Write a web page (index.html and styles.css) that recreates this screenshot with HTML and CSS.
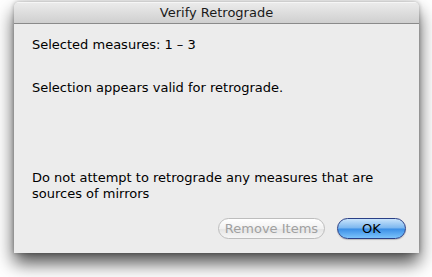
FILE: index.html
```html
<!DOCTYPE html>
<html lang="en">
<head>
    <meta charset="UTF-8">
    <meta name="viewport" content="width=device-width, initial-scale=1.0">
    <title>Verify Retrograde</title>
    <link rel="stylesheet" href="styles.css">
</head>
<body>

<div class="window">
    <div class="titlebar">Verify Retrograde</div>
    <div class="content">
        <p class="line first">Selected measures: 1 &ndash; 3</p>
        <p class="line status">Selection appears valid for retrograde.</p>
        <p class="line warning">Do not attempt to retrograde any measures that are sources of mirrors</p>
        <div class="buttons">
            <button class="btn" disabled>Remove Items</button>
            <button class="btn default">OK</button>
        </div>
    </div>
</div>

</body>
</html>
```

FILE: styles.css
```css
html {
    height: 100%;
}
body {
    box-sizing: border-box;
    min-height: 277px;
    height: 100%;
    margin: 0;
    padding: 2px 0 0 14px;
    background-color: #fff;
    font-family: "DejaVu Sans", "Lucida Grande", sans-serif;
    font-size: 13px;
    color: #000;
}
.window {
    width: 405px;
    height: 251px;
    background-color: #ececec;
    border-radius: 5px 5px 0 0;
    box-shadow: 0 10px 18px rgba(0, 0, 0, 0.7), 0 0 4px rgba(0, 0, 0, 0.3);
    display: flex;
    flex-direction: column;
    overflow: hidden;
}
.titlebar {
    height: 20px;
    line-height: 20px;
    text-align: center;
    background: linear-gradient(#ebebeb, #cfcfcf);
    border-top: 1px solid #f6f6f6;
    border-bottom: 1px solid #8a8a8a;
    color: #1a1a1a;
}
.content {
    flex: 1;
    display: flex;
    flex-direction: column;
    padding: 13px 13px 14px 18px;
}
.line {
    margin: 0;
    line-height: 16px;
}
.status {
    margin-top: 27px;
}
.warning {
    margin-top: 74px;
    width: 360px;
    line-height: 16px;
}
.buttons {
    margin-top: auto;
    display: flex;
    justify-content: flex-end;
    gap: 12px;
}
.btn {
    height: 21px;
    padding: 0;
    border-radius: 11px;
    font-family: inherit;
    font-size: 13px;
    line-height: 19px;
    white-space: nowrap;
}
.btn[disabled] {
    width: 107px;
    color: #a0a0a0;
    border: 1px solid #bdbdbd;
    background: linear-gradient(#ffffff, #f1f1f1 50%, #e4e4e4 51%, #f6f6f6);
}
.default {
    width: 69px;
    color: #000;
    border: 1px solid #2a3f86;
    background: linear-gradient(#c9e4fb, #7ab6ef 48%, #3a8ee6 52%, #7cc3fb);
    box-shadow: 0 1px 1px rgba(0, 0, 0, 0.2);
}
```
